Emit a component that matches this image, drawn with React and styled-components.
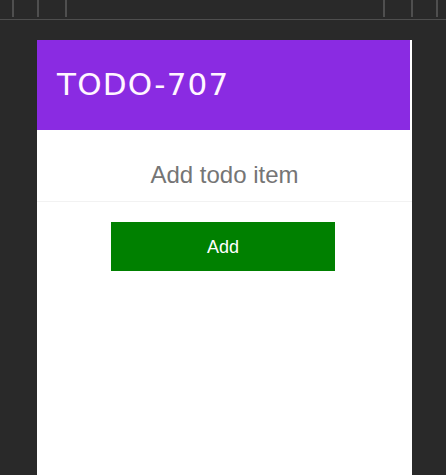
import React from "react";
import styled, { createGlobalStyle } from "styled-components";

const Global = createGlobalStyle`
  html, body { margin: 0; padding: 0; background: #292929; }
  body { font-family: "Liberation Sans", Arial, sans-serif; }
  * { box-sizing: border-box; }
`;

const Page = styled.div`
  min-height: 100vh;
  display: flex;
  flex-direction: column;
  background: #292929;
`;

const Ruler = styled.div`
  height: 20px;
  display: flex;
  justify-content: space-between;
  border-bottom: 1px solid #4e4e4e;
`;

const TickGroup = styled.div`
  display: flex;
  height: 17px;
  padding-right: ${(p) => p.$pr || 0}px;
`;

const Tick = styled.span`
  width: 2px;
  height: 17px;
  background: #4f4f4f;
  margin-left: ${(p) => p.$ml}px;
`;

const Stage = styled.div`
  flex: 1;
  display: flex;
  padding: 20px 34px 0 37px;
`;

const Panel = styled.div`
  flex: 1;
  background: #ffffff;
  display: flex;
  flex-direction: column;
  align-items: center;
`;

const Header = styled.header`
  align-self: stretch;
  margin-right: 2px;
  height: 90px;
  background: #8a2be2;
  display: flex;
  align-items: center;
  padding: 0 0 2px 20px;
`;

const Title = styled.h1`
  margin: 0;
  font-family: "DejaVu Sans", "Open Sans", sans-serif;
  font-weight: 400;
  font-size: 31px;
  letter-spacing: 1.2px;
  color: #fff6ff;
`;

const Input = styled.input`
  align-self: stretch;
  height: 72px;
  border: none;
  border-bottom: 1px solid #f2f2f2;
  outline: none;
  background: #fff;
  text-align: center;
  font-family: "Liberation Sans", Arial, sans-serif;
  font-size: 24px;
  padding: 18px 0 0 0;
  &::placeholder { color: #757575; }
`;

const Button = styled.button`
  margin-top: 20px;
  margin-right: 3px;
  width: 224px;
  height: 49px;
  border: none;
  background: #008000;
  color: #ffffff;
  font-family: "Liberation Sans", Arial, sans-serif;
  font-size: 18px;
  padding-top: 2px;
  cursor: pointer;
`;

export default function App() {
  return (
    <Page>
      <Global />
      <Ruler>
        <TickGroup>
          <Tick $ml={12} />
          <Tick $ml={23} />
          <Tick $ml={26} />
        </TickGroup>
        <TickGroup $pr={8}>
          <Tick $ml={0} />
          <Tick $ml={26} />
          <Tick $ml={23} />
        </TickGroup>
      </Ruler>
      <Stage>
        <Panel>
          <Header>
            <Title>TODO-707</Title>
          </Header>
          <Input placeholder="Add todo item" />
          <Button>Add</Button>
        </Panel>
      </Stage>
    </Page>
  );
}
